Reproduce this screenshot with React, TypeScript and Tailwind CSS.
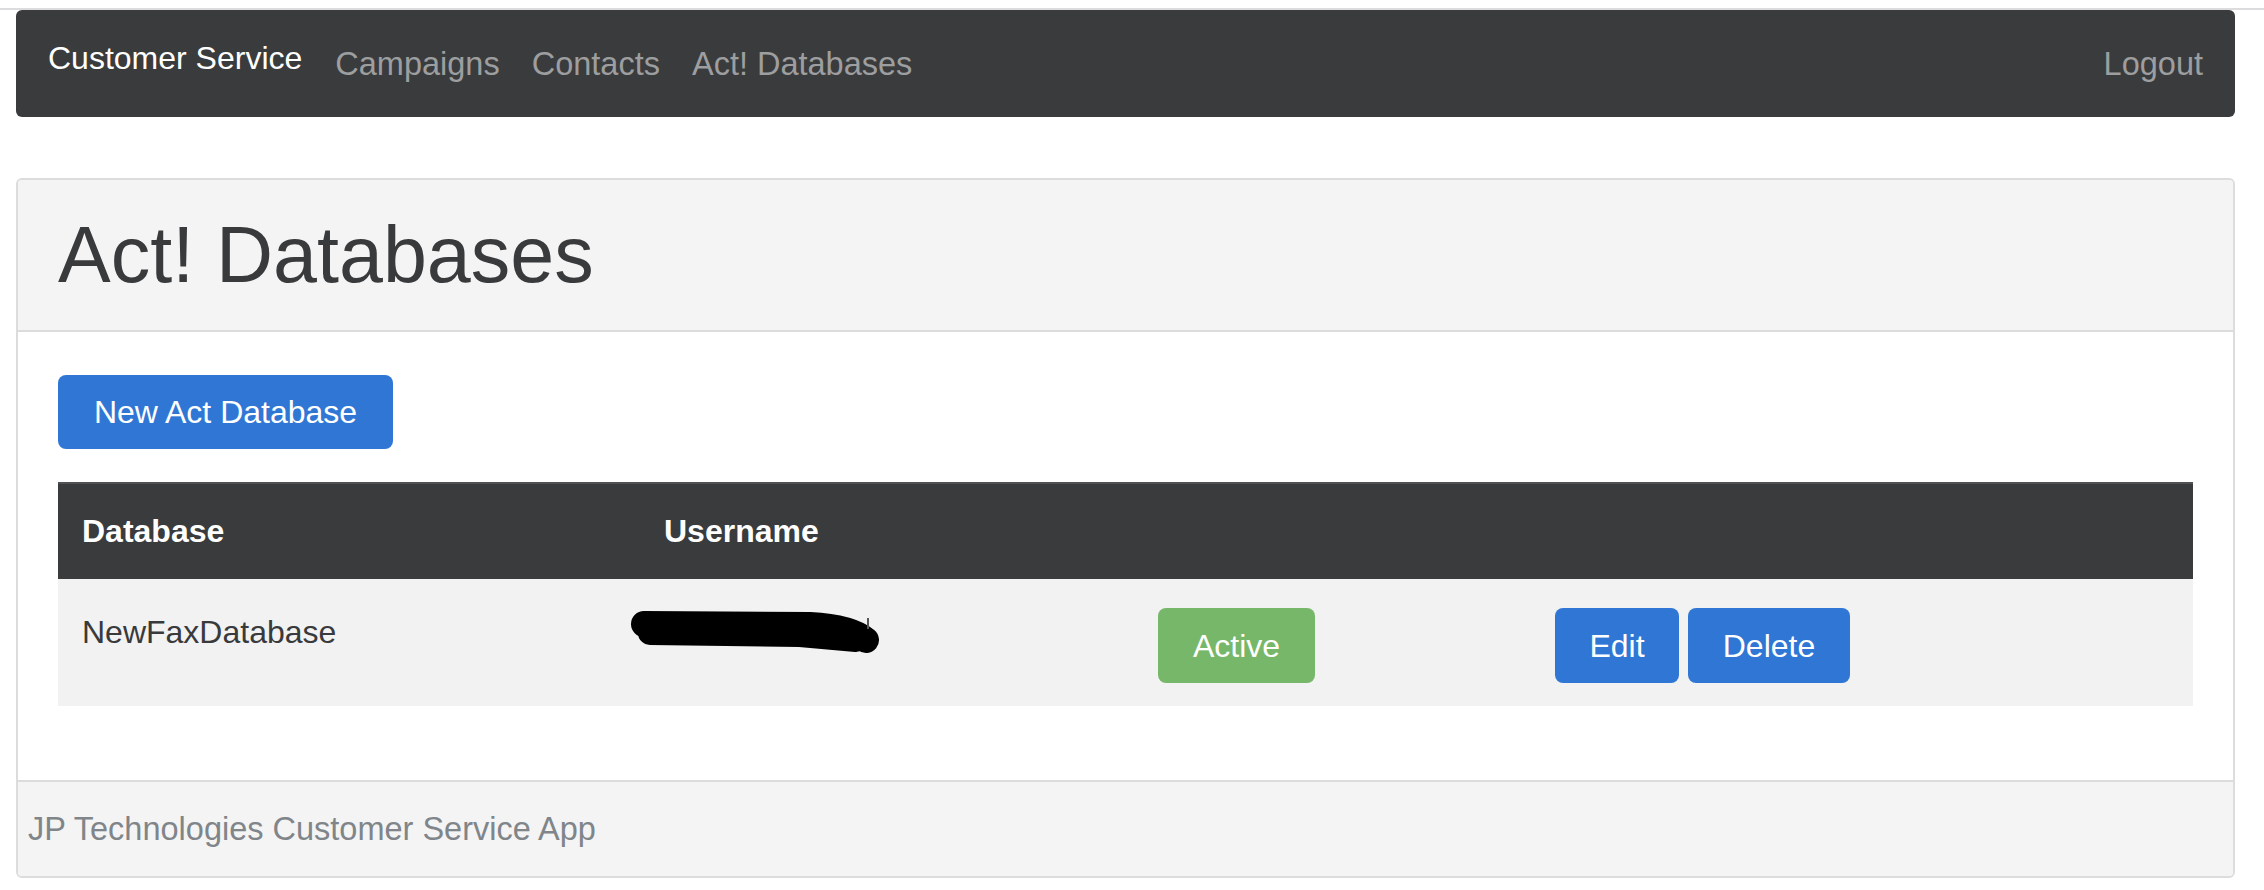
import React from "react";

const navLinks = ["Campaigns", "Contacts", "Act! Databases"];

function Redaction() {
  // the black marker stroke hiding the username
  return (
    <svg width="252" height="46" viewBox="0 0 252 46" className="-ml-[34px] mt-[3px] block">
      <path d="M14 13 L180 14 Q220 16 236 29" stroke="#000" strokeWidth="26" strokeLinecap="round" fill="none" />
      <path d="M20 22 L170 24 L226 29" stroke="#000" strokeWidth="24" strokeLinecap="round" fill="none" />
      <rect x="237" y="7" width="2" height="11" fill="#555" />
    </svg>
  );
}

export default function App() {
  return (
    <div className="min-h-screen bg-white pt-[8px] font-['Liberation_Sans',Arial,sans-serif] text-[#393a3c]">
      <div className="h-[2px] bg-[#dcdcdf]" />

      <div className="px-[16px] pr-[29px]">
        {/* navbar */}
        <nav className="flex h-[107px] items-center rounded-[6px] bg-[#3a3b3d] px-[32px]">
          <span className="mb-[12px] mr-[17px] text-[32px] leading-[48px] text-white">Customer Service</span>
          {navLinks.map((l) => (
            <a key={l} className="px-[16px] text-[32.5px] leading-[48px] text-[#9d9e9f]">
              {l}
            </a>
          ))}
          <a className="ml-auto text-[32.5px] leading-[48px] text-[#9d9e9f]">Logout</a>
        </nav>

        {/* card */}
        <div className="mt-[61px] overflow-hidden rounded-[6px] border-2 border-[#dcdcdc]">
          <div className="flex h-[152px] items-center border-b-2 border-[#dcdcdc] bg-[#f4f4f4] px-[40px]">
            <h1 className="text-[79px] leading-[96px] text-[#393a3c]">Act! Databases</h1>
          </div>

          <div className="bg-white px-[40px] pb-[74px] pt-[43px]">
            <button className="h-[74px] w-[335px] rounded-[8px] bg-[#3077d5] text-[32px] text-white">
              New Act Database
            </button>

            <table className="mt-[33px] w-full border-collapse text-[32px]">
              <thead>
                <tr className="border-t-2 border-[#505153] bg-[#3a3b3d] text-white">
                  <th className="w-[582px] px-[24px] pb-[24px] pt-[23px] text-left font-bold leading-[48px]">Database</th>
                  <th className="w-[494px] px-[24px] pb-[24px] pt-[23px] text-left font-bold leading-[48px]">Username</th>
                  <th className="w-[397px] px-[24px]" />
                  <th className="px-[24px]" />
                </tr>
              </thead>
              <tbody>
                <tr className="h-[127px] bg-[#f2f2f2] align-top">
                  <td className="px-[24px] pt-[29px] leading-[48px] text-[#393a3c]">NewFaxDatabase</td>
                  <td className="px-[24px] pt-[29px]">
                    <Redaction />
                  </td>
                  <td className="px-[24px] pt-[29px]">
                    <span className="flex h-[75px] w-[157px] items-center justify-center rounded-[8px] bg-[#77b76a] text-white">
                      Active
                    </span>
                  </td>
                  <td className="px-[24px] pt-[29px]">
                    <div className="flex gap-[9px]">
                      <button className="h-[75px] w-[124px] rounded-[8px] bg-[#3077d5] text-white">Edit</button>
                      <button className="h-[75px] w-[162px] rounded-[8px] bg-[#3077d5] text-white">Delete</button>
                    </div>
                  </td>
                </tr>
              </tbody>
            </table>
          </div>

          <div className="flex h-[96px] items-center border-t-2 border-[#dcdcdc] bg-[#f4f4f4] pl-[10px] text-[32.5px] text-[#80858a]">
            JP Technologies Customer Service App
          </div>
        </div>
      </div>
    </div>
  );
}
